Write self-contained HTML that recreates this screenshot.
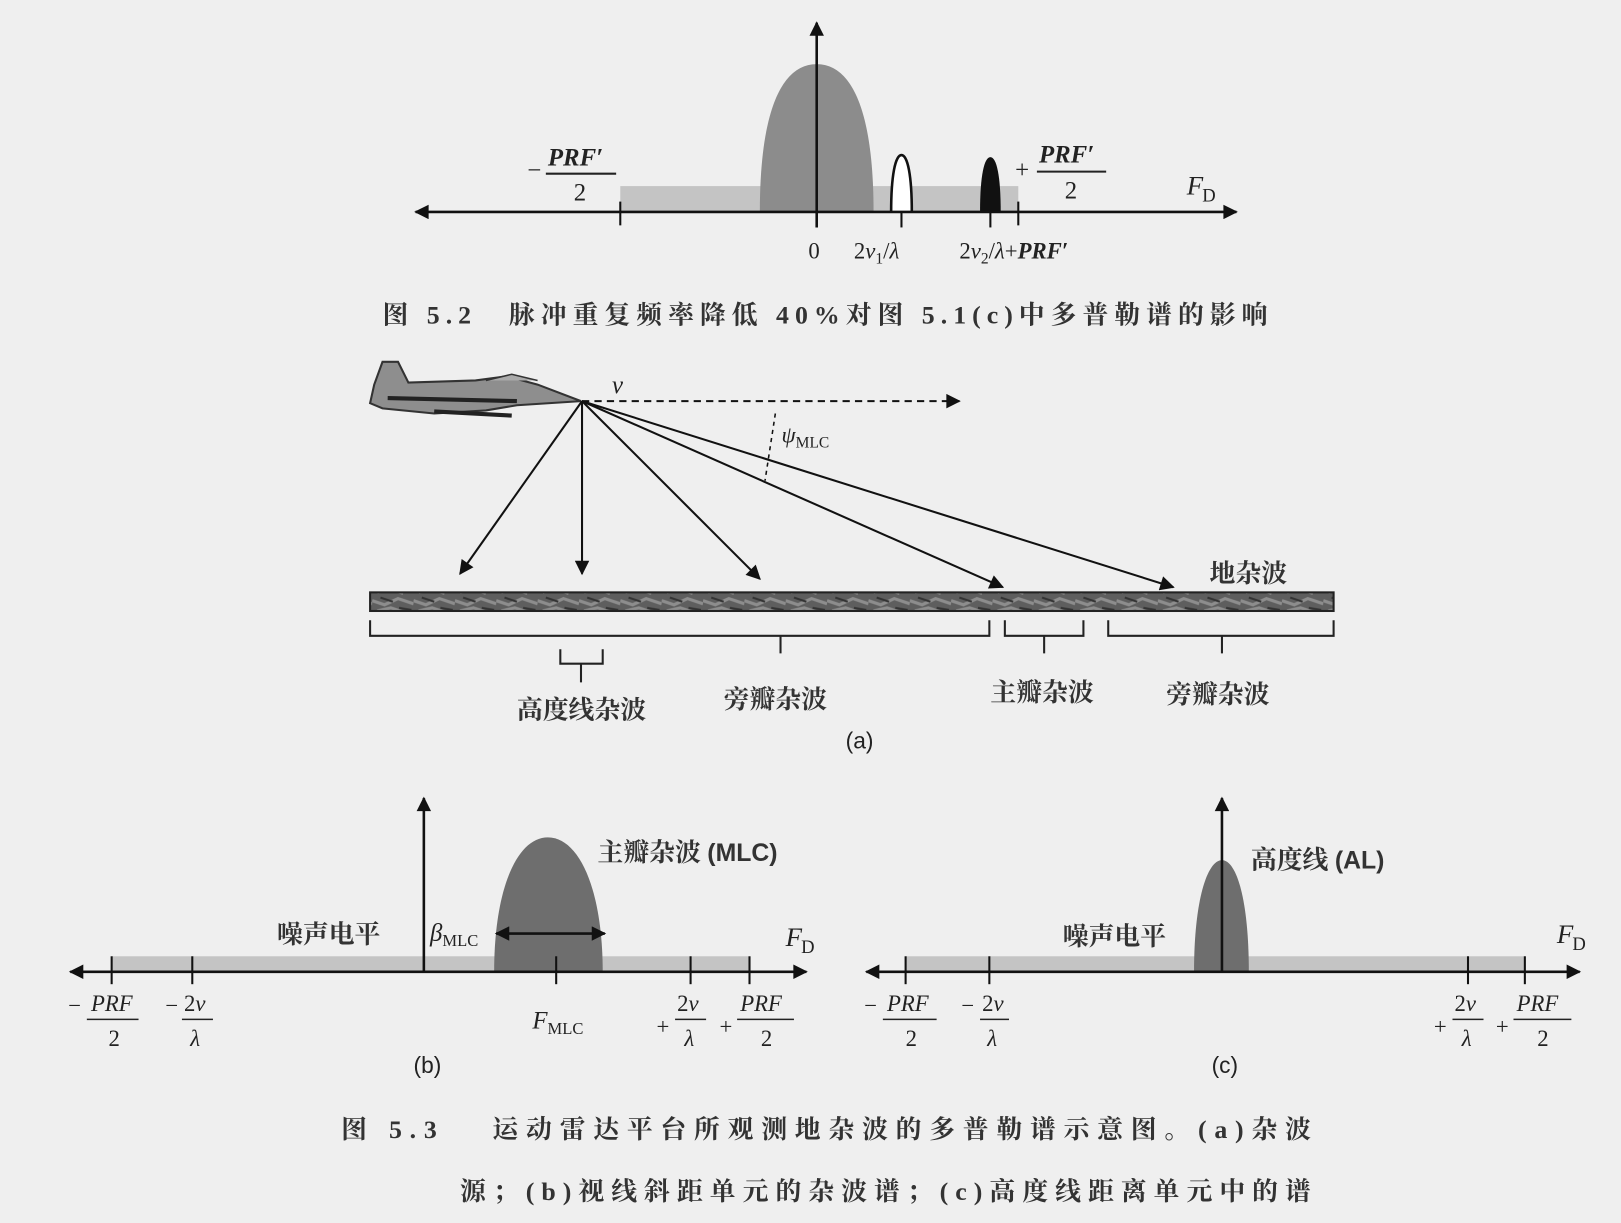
<!DOCTYPE html>
<html><head><meta charset="utf-8"><style>
html,body{margin:0;padding:0;background:#efefef;}
svg{display:block}
text{font-family:"Liberation Serif","Noto Serif CJK SC",serif;fill:#222}
.cj{font-family:"Liberation Serif","Noto Serif CJK SC",serif;font-size:25px;font-weight:bold;fill:#333}
.sn{font-family:"Liberation Sans","Noto Sans CJK SC",sans-serif}
.it{font-style:italic}
</style></head><body>
<svg width="1621" height="1223" viewBox="0 0 1568 1183" preserveAspectRatio="none" xmlns="http://www.w3.org/2000/svg">
<defs>
<marker id="a2" viewBox="0 0 10 10" markerWidth="18" markerHeight="14" refX="9" refY="5" orient="auto-start-reverse" markerUnits="userSpaceOnUse"><path d="M0,0 L10,5 L0,10 Z" fill="#111"/></marker>
<pattern id="gr" width="40" height="18" patternUnits="userSpaceOnUse"><rect width="40" height="18" fill="#5e5e5e"/><path d="M0,5 L12,9 L25,3 L40,8 M5,15 L18,12 L30,16" stroke="#8d8d8d" stroke-width="3" fill="none"/><path d="M8,2 L20,6 M26,12 L38,14" stroke="#333" stroke-width="2"/></pattern>
</defs>
<rect width="1568" height="1183" fill="#efefef"/>

<!-- Fig 5.2 -->
<rect x="600" y="180" width="385" height="25" fill="#c4c4c4"/>
<path d="M735,205 C735,110 755,62 790,62 C825,62 845,110 845,205 Z" fill="#8c8c8c"/>
<path d="M862,205 C862,170 866,150 872,150 C878,150 882,170 882,205" fill="#fff" stroke="#111" stroke-width="2.5"/>
<path d="M948,205 C948,170 952,152 958,152 C964,152 968,170 968,205 Z" fill="#111"/>
<line x1="402" y1="205" x2="1196" y2="205" stroke="#111" stroke-width="2.5" marker-end="url(#a2)" marker-start="url(#a2)"/>
<line x1="790" y1="220" x2="790" y2="22" stroke="#111" stroke-width="2.5" marker-end="url(#a2)"/>
<line x1="600" y1="195" x2="600" y2="218" stroke="#111" stroke-width="2"/>
<line x1="985" y1="195" x2="985" y2="218" stroke="#111" stroke-width="2"/>
<line x1="872" y1="205" x2="872" y2="220" stroke="#111" stroke-width="2"/>
<line x1="958" y1="205" x2="958" y2="220" stroke="#111" stroke-width="2"/>
<text x="510" y="172" font-size="24">−</text>
<text x="530" y="160" font-size="24" class="it" font-weight="bold">PRF′</text>
<line x1="528" y1="168" x2="596" y2="168" stroke="#222" stroke-width="2"/>
<text x="555" y="194" font-size="24">2</text>
<text x="982" y="172" font-size="24">+</text>
<text x="1005" y="157" font-size="24" class="it" font-weight="bold">PRF′</text>
<line x1="1003" y1="166" x2="1070" y2="166" stroke="#222" stroke-width="2"/>
<text x="1030" y="192" font-size="24">2</text>
<text x="1148" y="188" font-size="26" class="it">F</text><text x="1163" y="195" font-size="18">D</text>
<text x="782" y="250" font-size="22">0</text>
<text x="826" y="250" font-size="22">2<tspan class="it">v</tspan><tspan font-size="15" dy="5">1</tspan><tspan dy="-5">/</tspan><tspan class="it">λ</tspan></text>
<text x="928" y="250" font-size="22">2<tspan class="it">v</tspan><tspan font-size="15" dy="5">2</tspan><tspan dy="-5">/</tspan><tspan class="it">λ</tspan>+<tspan class="it" font-weight="bold">PRF′</tspan></text>
<text x="370" y="313" class="cj" font-size="30" textLength="856" lengthAdjust="spacing">图 5.2　脉冲重复频率降低 40%对图 5.1(c)中多普勒谱的影响</text>

<!-- Fig 5.3 (a) -->
<g>
<path d="M362,372 L370,350 L385,350 L395,370 L460,368 L490,364 L520,372 L562,388 L500,392 L470,397 L420,400 L370,395 L358,390 Z" fill="#8e8e8e" stroke="#333" stroke-width="2"/>
<path d="M375,385 L500,388 M420,398 L495,402" stroke="#222" stroke-width="4"/>
<path d="M470,368 L495,362 L520,368" fill="#aaa" stroke="#333" stroke-width="1.5"/>
</g>
<line x1="563" y1="388" x2="928" y2="388" stroke="#111" stroke-width="2" stroke-dasharray="7,5" marker-end="url(#a2)"/>
<text x="592" y="380" font-size="24" class="it">v</text>
<line x1="750" y1="400" x2="740" y2="465" stroke="#111" stroke-width="1.5" stroke-dasharray="4,4"/>
<text x="756" y="428" font-size="22" class="it">ψ<tspan font-size="15" font-style="normal" dy="5">MLC</tspan></text>
<g stroke="#111" stroke-width="2" marker-end="url(#a2)">
<line x1="563" y1="388" x2="445" y2="555"/>
<line x1="563" y1="388" x2="563" y2="555"/>
<line x1="563" y1="388" x2="735" y2="560"/>
<line x1="563" y1="388" x2="970" y2="568"/>
<line x1="563" y1="388" x2="1135" y2="568"/>
</g>
<text x="1170" y="563" class="cj">地杂波</text>
<rect x="358" y="573" width="932" height="18" fill="url(#gr)" stroke="#222" stroke-width="2"/>
<g stroke="#222" stroke-width="2" fill="none">
<path d="M358,600 L358,615 L957,615 L957,600 M755,615 L755,632"/>
<path d="M542,628 L542,642 L583,642 L583,628 M562,642 L562,660"/>
<path d="M972,600 L972,615 L1048,615 L1048,600 M1010,615 L1010,632"/>
<path d="M1072,600 L1072,615 L1290,615 L1290,600 M1182,615 L1182,632"/>
</g>
<text x="500" y="695" class="cj">高度线杂波</text>
<text x="700" y="685" class="cj">旁瓣杂波</text>
<text x="958" y="678" class="cj">主瓣杂波</text>
<text x="1128" y="680" class="cj">旁瓣杂波</text>
<text x="818" y="724" font-size="22" class="sn">(a)</text>

<!-- (b) -->
<rect x="108" y="925" width="617" height="15" fill="#c4c4c4"/>
<path d="M478,940 C478,860 500,810 530,810 C560,810 583,860 583,940 Z" fill="#6e6e6e"/>
<line x1="68" y1="940" x2="780" y2="940" stroke="#111" stroke-width="2.5" marker-end="url(#a2)" marker-start="url(#a2)"/>
<line x1="410" y1="940" x2="410" y2="772" stroke="#111" stroke-width="2.5" marker-end="url(#a2)"/>
<line x1="480" y1="903" x2="585" y2="903" stroke="#111" stroke-width="2.5" marker-end="url(#a2)" marker-start="url(#a2)"/>
<g stroke="#111" stroke-width="2"><line x1="108" y1="925" x2="108" y2="952"/><line x1="186" y1="925" x2="186" y2="952"/><line x1="538" y1="925" x2="538" y2="952"/><line x1="668" y1="925" x2="668" y2="952"/><line x1="725" y1="925" x2="725" y2="952"/></g>
<text x="578" y="833" class="cj">主瓣杂波 <tspan class="sn" font-size="24">(MLC)</tspan></text>
<text x="268" y="912" class="cj">噪声电平</text>
<text x="416" y="910" font-size="24" class="it">β<tspan font-size="16" font-style="normal" dy="5">MLC</tspan></text>
<text x="760" y="915" font-size="26" class="it">F</text><text x="775" y="922" font-size="18">D</text>
<text x="66" y="980" font-size="22">−</text><text x="88" y="978" font-size="22" class="it">PRF</text><line x1="84" y1="986" x2="134" y2="986" stroke="#222" stroke-width="1.5"/><text x="105" y="1012" font-size="22">2</text>
<text x="160" y="980" font-size="22">−</text><text x="178" y="978" font-size="22">2<tspan class="it">v</tspan></text><line x1="176" y1="986" x2="206" y2="986" stroke="#222" stroke-width="1.5"/><text x="184" y="1012" font-size="22" class="it">λ</text>
<text x="515" y="995" font-size="24" class="it">F<tspan font-size="16" font-style="normal" dy="5">MLC</tspan></text>
<text x="635" y="1000" font-size="22">+</text><text x="655" y="978" font-size="22">2<tspan class="it">v</tspan></text><line x1="653" y1="986" x2="683" y2="986" stroke="#222" stroke-width="1.5"/><text x="662" y="1012" font-size="22" class="it">λ</text>
<text x="696" y="1000" font-size="22">+</text><text x="716" y="978" font-size="22" class="it">PRF</text><line x1="713" y1="986" x2="768" y2="986" stroke="#222" stroke-width="1.5"/><text x="736" y="1012" font-size="22">2</text>
<text x="400" y="1038" font-size="22" class="sn">(b)</text>

<!-- (c) -->
<rect x="876" y="925" width="599" height="15" fill="#c4c4c4"/>
<path d="M1155,940 C1155,870 1168,832 1182,832 C1196,832 1208,870 1208,940 Z" fill="#6e6e6e"/>
<line x1="838" y1="940" x2="1528" y2="940" stroke="#111" stroke-width="2.5" marker-end="url(#a2)" marker-start="url(#a2)"/>
<line x1="1182" y1="940" x2="1182" y2="772" stroke="#111" stroke-width="2.5" marker-end="url(#a2)"/>
<g stroke="#111" stroke-width="2"><line x1="876" y1="925" x2="876" y2="952"/><line x1="957" y1="925" x2="957" y2="952"/><line x1="1420" y1="925" x2="1420" y2="952"/><line x1="1475" y1="925" x2="1475" y2="952"/></g>
<text x="1210" y="840" class="cj">高度线 <tspan class="sn" font-size="24">(AL)</tspan></text>
<text x="1028" y="914" class="cj">噪声电平</text>
<text x="1506" y="912" font-size="26" class="it">F</text><text x="1521" y="919" font-size="18">D</text>
<text x="836" y="980" font-size="22">−</text><text x="858" y="978" font-size="22" class="it">PRF</text><line x1="854" y1="986" x2="906" y2="986" stroke="#222" stroke-width="1.5"/><text x="876" y="1012" font-size="22">2</text>
<text x="930" y="980" font-size="22">−</text><text x="950" y="978" font-size="22">2<tspan class="it">v</tspan></text><line x1="948" y1="986" x2="976" y2="986" stroke="#222" stroke-width="1.5"/><text x="955" y="1012" font-size="22" class="it">λ</text>
<text x="1387" y="1000" font-size="22">+</text><text x="1407" y="978" font-size="22">2<tspan class="it">v</tspan></text><line x1="1405" y1="986" x2="1435" y2="986" stroke="#222" stroke-width="1.5"/><text x="1414" y="1012" font-size="22" class="it">λ</text>
<text x="1447" y="1000" font-size="22">+</text><text x="1467" y="978" font-size="22" class="it">PRF</text><line x1="1464" y1="986" x2="1520" y2="986" stroke="#222" stroke-width="1.5"/><text x="1487" y="1012" font-size="22">2</text>
<text x="1172" y="1038" font-size="22" class="sn">(c)</text>

<text x="330" y="1101" class="cj" font-size="30" textLength="938" lengthAdjust="spacing">图 5.3　 运动雷达平台所观测地杂波的多普勒谱示意图。(a)杂波</text>
<text x="445" y="1161" class="cj" font-size="30" textLength="823" lengthAdjust="spacing">源；(b)视线斜距单元的杂波谱；(c)高度线距离单元中的谱</text>
</svg>
</body></html>
